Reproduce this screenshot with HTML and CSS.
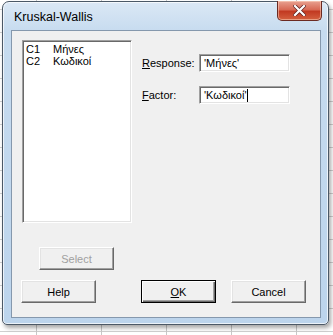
FILE: index.html
```html
<!DOCTYPE html>
<html lang="el">
<head>
    <meta charset="UTF-8">
    <meta name="viewport" content="width=device-width, initial-scale=1.0">
    <title>Kruskal-Wallis</title>
    <link rel="stylesheet" href="styles.css">
</head>
<body>
    <div class="window">
        <div class="titlebar">Kruskal-Wallis</div>
        <button class="close" type="button" aria-label="Close">
            <svg width="13" height="11" viewBox="0 0 13 11">
                <path d="M2 1 L11 10 M11 1 L2 10" stroke="#5a2020" stroke-width="3.6" stroke-linecap="square"/>
                <path d="M2 1 L11 10 M11 1 L2 10" stroke="#fff" stroke-width="2.2" stroke-linecap="square"/>
            </svg>
        </button>
        <div class="client">
            <div class="top">
                <div class="listbox">
                    <div class="item"><span class="col">C1</span>Μήνες</div>
                    <div class="item"><span class="col">C2</span>Κωδικοί</div>
                </div>
                <div class="fields">
                    <div class="field">
                        <label for="response"><u>R</u>esponse:</label>
                        <div class="input" id="response">'Μήνες'</div>
                    </div>
                    <div class="field">
                        <label for="factor"><u>F</u>actor:</label>
                        <div class="input" id="factor">'Κωδικοί'<span class="caret"></span></div>
                    </div>
                </div>
            </div>
            <div class="select-row">
                <button class="btn disabled" type="button">Select</button>
            </div>
            <div class="buttons">
                <button class="btn" type="button">Help</button>
                <button class="btn default" type="button"><u>O</u>K</button>
                <button class="btn" type="button">Cancel</button>
            </div>
        </div>
    </div>
</body>
</html>
```

FILE: styles.css
```css
body {
    margin: 0;
    width: 333px;
    height: 335px;
    overflow: hidden;
    font-family: 'Liberation Sans', Arial, sans-serif;
    font-size: 11px;
    color: #000;
    background-color: #fff;
    background-image:
        linear-gradient(to right, transparent 36px, #c8c8c8 36px, #c8c8c8 37px, transparent 37px),
        linear-gradient(to bottom, transparent 21px, #d0d0d0 21px, #d0d0d0 22px, transparent 22px);
    background-size: 65px 100%, 100% 23px;
    background-position: 0 0, 0 11px;
}
.window {
    position: relative;
    margin: 1px 0 0 2px;
    width: 327px;
    height: 324px;
    border: 1px solid #4b5866;
    border-radius: 7px 7px 5px 5px;
    background: linear-gradient(to bottom, #dbe8f5 0, #c6dbef 30px, #bcd4ec 100%);
    box-shadow: inset 0 0 0 1px rgba(255, 255, 255, 0.7), 2px 3px 4px rgba(0, 0, 0, 0.35);
    box-sizing: border-box;
    padding: 0 7px 6px 8px;
    display: flex;
    flex-direction: column;
}
.titlebar {
    height: 28px;
    line-height: 30px;
    padding-left: 3px;
    font-size: 12.5px;
    color: #000;
}
.close {
    position: absolute;
    top: -1px;
    right: 6px;
    width: 45px;
    height: 20px;
    border: 1px solid #6b2a22;
    border-top: none;
    border-radius: 0 0 5px 5px;
    background: linear-gradient(to bottom, #e8a191 0, #d86a55 45%, #c23a22 55%, #d4603f 100%);
    box-shadow: inset 0 0 0 1px rgba(255, 220, 200, 0.5);
    padding: 0;
    display: flex;
    align-items: center;
    justify-content: center;
}
.client {
    flex: 1;
    background: #f0f0f0;
    border: 1px solid #8598ad;
    padding: 9px 10px 0 10px;
    display: flex;
    flex-direction: column;
}
.top {
    display: flex;
    height: 184px;
}
.listbox {
    width: 110px;
    height: 183px;
    box-sizing: border-box;
    background: #fff;
    border: 1px solid;
    border-color: #a0a0a0 #fff #fff #a0a0a0;
    box-shadow: inset 1px 1px 0 #696969, inset -1px -1px 0 #e3e3e3;
    padding: 2px 3px;
}
.item {
    height: 12px;
    line-height: 12px;
}
.col {
    display: inline-block;
    width: 27px;
}
.fields {
    margin-left: 10px;
    padding-top: 14px;
}
.field {
    display: flex;
    align-items: center;
    height: 18px;
    margin-bottom: 14px;
}
.field label {
    width: 57px;
}
.input {
    width: 91px;
    height: 18px;
    box-sizing: border-box;
    background: #fff;
    border: 1px solid;
    border-color: #a0a0a0 #fff #fff #a0a0a0;
    box-shadow: inset 1px 1px 0 #696969, inset -1px -1px 0 #e3e3e3;
    padding: 2px 4px;
    line-height: 13px;
}
.caret {
    display: inline-block;
    width: 1px;
    height: 13px;
    background: #000;
    vertical-align: top;
}
.btn {
    width: 75px;
    height: 23px;
    box-sizing: border-box;
    font-family: inherit;
    font-size: 11px;
    color: #000;
    background: #f0f0f0;
    border: 1px solid;
    border-color: #fff #696969 #696969 #fff;
    box-shadow: inset -1px -1px 0 #a0a0a0, inset 1px 1px 0 #e3e3e3;
    padding: 0;
}
.btn.default {
    border: 1px solid #000;
    box-shadow: inset 1px 1px 0 #fff, inset -1px -1px 0 #696969, inset -2px -2px 0 #a0a0a0;
}
.btn.disabled {
    color: #a0a0a0;
}
.select-row {
    padding-left: 17px;
    margin-top: 23px;
}
.buttons {
    display: flex;
    margin-top: 10px;
    margin-left: -1px;
}
.buttons .btn + .btn {
    margin-left: 45px;
}
.buttons .btn + .btn + .btn {
    margin-left: 15px;
}
```
